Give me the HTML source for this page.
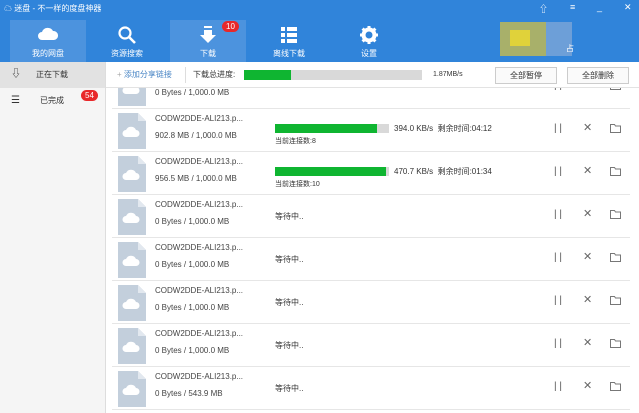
<!DOCTYPE html>
<html><head><meta charset="utf-8"><style>
*{margin:0;padding:0;box-sizing:border-box}
body{width:639px;height:413px;overflow:hidden;font-family:"Liberation Sans","Noto Sans CJK SC",sans-serif;background:#fff;position:relative;color:#333}
.hdr{position:absolute;left:0;top:0;width:639px;height:62px;background:#3084da}
.title{position:absolute;left:4px;top:3px;color:#fff;font-size:8px}
.wc{position:absolute;top:2px;color:#fff;font-size:9px}
.tab{position:absolute;top:20px;width:76px;height:42px;color:#fff;font-size:8px;text-align:center}
.tab.on{background:#4c93de}
.tab svg{position:absolute;left:28px;top:5px}
.tab span{position:absolute;left:0;right:0;top:28px}
.badge{position:absolute;background:#e8282a;color:#fff;border-radius:7px;font-size:8px;padding:0 4px;line-height:11px}
.side{position:absolute;left:0;top:62px;width:106px;height:351px;background:#f5f5f5;border-right:1px solid #ddd}
.sitem{position:absolute;left:0;width:105px;height:26px;font-size:8px;line-height:26px}
.tool{position:absolute;left:106px;top:62px;width:533px;height:26px;border-bottom:1px solid #e3e3e3;font-size:8px;line-height:26px}
.btn{position:absolute;top:5px;width:62px;height:17px;border:1px solid #ccc;background:#fafafa;font-size:8px;line-height:15px;text-align:center}
.list{position:absolute;left:106px;top:88px;width:533px;height:325px;overflow:hidden}
.row{position:absolute;left:6px;width:518px;height:43px;border-bottom:1px solid #e6e6e6}
.fi{position:absolute;left:6px;top:4px}
.nm{position:absolute;left:43px;top:5px;font-size:8px;color:#444}
.sz{position:absolute;left:43px;top:22px;font-size:8px;color:#444}
.bar{position:absolute;left:163px;top:15px;width:114px;height:9px;background:#d9d9d9}
.bar i{display:block;height:9px;background:#0fb531}
.sp{position:absolute;left:282px;top:14px;font-size:8px}
.cn{position:absolute;left:163px;top:27px;font-size:7px}
.wt{position:absolute;left:163px;top:16px;font-size:8px}
.ic{position:absolute;top:14px}
</style></head><body>
<div class="hdr">
<div class="title">☁ 迷盘 - 不一样的度盘神器</div>
<span class="wc" style="left:539px">⇧</span><span class="wc" style="left:570px">≡</span><span class="wc" style="left:597px">_</span><span class="wc" style="left:624px">✕</span>
<div class="tab on" style="left:10px"><svg width="20" height="18" viewBox="0 0 20 18"><path d="M4 15a4 4 0 0 1 0-8 6 6 0 0 1 11-1 4.5 4.5 0 0 1 1 9z" fill="#fff"/></svg><span>我的网盘</span></div>
<div class="tab" style="left:89px"><svg width="20" height="20" viewBox="0 0 20 20"><circle cx="8" cy="8" r="5.5" fill="none" stroke="#fff" stroke-width="2.2"/><path d="M12 12l6 6" stroke="#fff" stroke-width="2.6"/></svg><span>资源搜索</span></div>
<div class="tab on" style="left:170px"><svg width="20" height="20" viewBox="0 0 20 20"><rect x="6" y="1" width="8" height="2" fill="#fff"/><path d="M6 5h8v5h4l-8 8-8-8h4z" fill="#fff"/></svg><span>下载</span></div>
<div class="badge" style="left:222px;top:21px">10</div>
<div class="tab" style="left:251px"><svg width="20" height="20" viewBox="0 0 20 20" fill="#fff"><rect x="2" y="2" width="4" height="4"/><rect x="8" y="2" width="10" height="4"/><rect x="2" y="8" width="4" height="4"/><rect x="8" y="8" width="10" height="4"/><rect x="2" y="14" width="4" height="4"/><rect x="8" y="14" width="10" height="4"/></svg><span>离线下载</span></div>
<div class="tab" style="left:331px"><svg width="20" height="20" viewBox="0 0 20 20"><circle cx="10" cy="10" r="5.5" fill="none" stroke="#fff" stroke-width="4"/><path d="M10 1v4M10 15v4M1 10h4M15 10h4M3.6 3.6l3 3M13.4 13.4l3 3M3.6 16.4l3-3M13.4 6.6l3-3" stroke="#fff" stroke-width="3"/></svg><span>设置</span></div>
<div style="position:absolute;left:500px;top:22px;width:46px;height:34px;background:#a8b06a"></div>
<div style="position:absolute;left:510px;top:30px;width:20px;height:16px;background:#e0d23a"></div>
<div style="position:absolute;left:546px;top:22px;width:26px;height:34px;background:#6d9fd8"></div>
<div style="position:absolute;left:566px;top:43px;color:#fff;font-size:8px">占</div>
</div>
<div class="side">
<div class="sitem" style="top:0;background:#e2e2e2"><span style="position:absolute;left:11px;font-size:10px">⇩</span><span style="position:absolute;left:36px">正在下载</span></div>
<div class="sitem" style="top:26px"><span style="position:absolute;left:11px;font-size:10px">☰</span><span style="position:absolute;left:40px">已完成</span></div>
<div class="badge" style="left:81px;top:28px">54</div>
</div>
<div class="tool">
<span style="position:absolute;left:11px;color:#4a86c5"><span style="color:#aaa">+</span> 添加分享链接</span>
<div style="position:absolute;left:79px;top:5px;width:1px;height:16px;background:#ddd"></div>
<span style="position:absolute;left:87px">下载总进度:</span>
<div style="position:absolute;left:138px;top:8px;width:178px;height:10px;background:#d9d9d9"><div style="width:47px;height:10px;background:#0fb531"></div></div>
<span style="position:absolute;left:327px;font-size:7px">1.87MB/s</span>
<div class="btn" style="left:389px">全部暂停</div>
<div class="btn" style="left:461px">全部删除</div>
</div>
<div class="list" id="L"></div>
<script>
var rows=[
["0 Bytes / 1,000.0 MB","x"],
["902.8 MB / 1,000.0 MB","d",102,"394.0 KB/s","04:12","8"],
["956.5 MB / 1,000.0 MB","d",111,"470.7 KB/s","01:34","10"],
["0 Bytes / 1,000.0 MB","w"],["0 Bytes / 1,000.0 MB","w"],["0 Bytes / 1,000.0 MB","w"],["0 Bytes / 1,000.0 MB","w"],["0 Bytes / 543.9 MB","w"]];
var h="";
rows.forEach(function(r,i){
var t=-22+43*i;
h+='<div class="row" style="top:'+t+'px"><svg class="fi" width="28" height="36" viewBox="0 0 28 36"><path d="M0 0h20l8 8v28H0z" fill="#c3cfdc"/><path d="M20 0v8h8z" fill="#e2e8ef"/><path d="M8 24a3.5 3.5 0 0 1 0-7 5.5 5.5 0 0 1 10 0 3.5 3.5 0 0 1 0 7z" fill="#fff"/></svg>';
h+='<div class="nm">CODW2DDE-ALI213.p...</div><div class="sz">'+r[0]+'</div>';
if(r[1]=="d"){h+='<div class="bar"><i style="width:'+r[2]+'px"></i></div><div class="sp">'+r[3]+'&nbsp; 剩余时间:'+r[4]+'</div><div class="cn">当前连接数:'+r[5]+'</div>';}
else if(r[1]=="w") h+='<div class="wt">等待中..</div>';
h+='<div class="ic" style="left:442px;font-size:10px;color:#555">| |</div><div class="ic" style="left:471px;font-size:11px;color:#666;top:12px">✕</div><svg class="ic" style="left:498px;top:15px" width="11" height="9" viewBox="0 0 11 9"><path d="M.5.5h4l1 1.5h5v6.5H.5z" fill="none" stroke="#777"/></svg></div>';
});
document.getElementById("L").innerHTML=h;
</script>
</body></html>
